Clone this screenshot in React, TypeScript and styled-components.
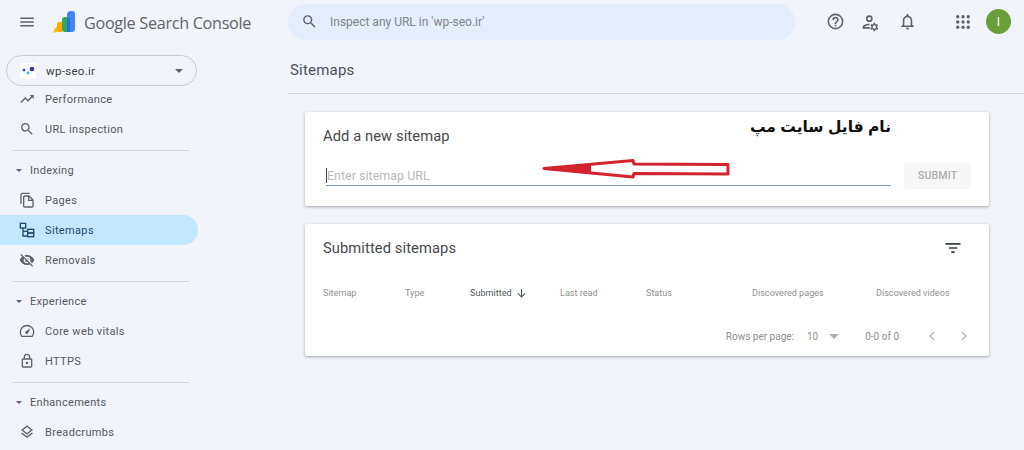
import styled, { createGlobalStyle } from 'styled-components';
import type { ReactNode } from 'react';

const GlobalStyle = createGlobalStyle`
  html, body {
    margin: 0;
    padding: 0;
    background: #f1f4fa;
    font-family: 'Roboto', 'Liberation Sans', sans-serif;
  }
`;

const Page = styled.div`
  width: 1024px;
  height: 450px;
  overflow: hidden;
  background: #f1f4fa;
  display: flex;
  flex-direction: column;
`;

const Header = styled.header`
  height: 43px;
  flex: none;
  display: flex;
  align-items: center;
`;

const Brand = styled.div`
  width: 288px;
  flex: none;
  display: flex;
  align-items: center;
  padding-left: 18px;
  box-sizing: border-box;
`;

const LogoMark = styled.svg`
  margin-left: 16px;
  flex: none;
`;

const BrandName = styled.span`
  font-family: 'Open Sans', 'Liberation Sans', sans-serif;
  font-size: 16.2px;
  color: #5f6368;
  letter-spacing: -0.3px;
  margin-left: 6px;
  padding-top: 2px;
  white-space: nowrap;
`;

const SearchBar = styled.div`
  width: 507px;
  height: 36px;
  flex: none;
  border-radius: 18px;
  background: #e3edfb;
  display: flex;
  align-items: center;
  gap: 12px;
  padding-left: 13px;
  box-sizing: border-box;
  font-size: 12px;
  color: #80868b;
`;

const HeaderActions = styled.div`
  flex: 1;
  display: flex;
  align-items: center;
  padding-left: 31px;
`;

const ActionSlot = styled.div<{ $gap?: number }>`
  width: 18px;
  height: 18px;
  margin-right: ${p => p.$gap ?? 18}px;
  display: flex;
  align-items: center;
  justify-content: center;
`;

const Avatar = styled.div`
  width: 25px;
  height: 25px;
  border-radius: 50%;
  background: #689f38;
  color: #fff;
  font-size: 12px;
  display: flex;
  align-items: center;
  justify-content: center;
`;

const Body = styled.div`
  flex: 1;
  display: flex;
  min-height: 0;
`;

const Sidebar = styled.nav`
  width: 288px;
  flex: none;
  padding-top: 12px;
  box-sizing: border-box;
`;

const PropertyPicker = styled.div`
  width: 191px;
  height: 31px;
  margin: 0 0 -2px 6px;
  border: 1px solid #c9ccd1;
  border-radius: 16px;
  box-sizing: border-box;
  display: flex;
  align-items: center;
  padding: 0 13px;
  font-size: 11.5px;
  color: #3c4043;
  letter-spacing: 0.3px;
`;

const PropertyLogo = styled.div`
  width: 16px;
  height: 16px;
  background: #fff;
  margin-right: 10px;
  display: flex;
  align-items: center;
  justify-content: center;
`;

const PropertyName = styled.span`
  flex: 1;
`;

const NavItem = styled.div<{ $active?: boolean }>`
  width: 198px;
  height: 30px;
  box-sizing: border-box;
  padding-left: 19px;
  display: flex;
  align-items: center;
  gap: 10px;
  font-size: 11px;
  letter-spacing: 0.35px;
  color: ${p => (p.$active ? '#1d4a6b' : '#55595e')};
  background: ${p => (p.$active ? '#c2e7ff' : 'transparent')};
  border-radius: ${p => (p.$active ? '0 15px 15px 0' : '0')};
`;

const NavDivider = styled.div`
  width: 177px;
  height: 1px;
  margin: 6px 0 4px 12px;
  background: #d5d7db;
`;

const SectionTitle = styled.div`
  height: 30px;
  box-sizing: border-box;
  padding-left: 16px;
  display: flex;
  align-items: center;
  gap: 8px;
  font-size: 11px;
  letter-spacing: 0.3px;
  color: #55595e;
`;

const Caret = styled.span<{ $w?: number; $color?: string }>`
  display: block;
  flex: none;
  width: 0;
  height: 0;
  border-left: ${p => p.$w ?? 3}px solid transparent;
  border-right: ${p => p.$w ?? 3}px solid transparent;
  border-top: ${p => p.$w ?? 3}px solid ${p => p.$color ?? '#5f6368'};
`;

const Main = styled.main`
  flex: 1;
  min-width: 0;
`;

const PageTitle = styled.h1`
  margin: 0;
  height: 51px;
  box-sizing: border-box;
  padding: 17px 0 0 2px;
  font-size: 15px;
  line-height: 20px;
  font-weight: 400;
  letter-spacing: 0.2px;
  color: #4d5156;
  border-bottom: 1px solid #d3d5d9;
`;

const Content = styled.div`
  width: 684px;
  margin: 18px 0 0 17px;
  display: flex;
  flex-direction: column;
  gap: 18px;
`;

const Card = styled.section`
  position: relative;
  background: #fff;
  border-radius: 2px;
  box-shadow: 0 1px 3px rgba(60, 64, 67, 0.45);
`;

const AddCard = styled(Card)`
  height: 94px;
  padding: 14px 18px 0;
  box-sizing: border-box;
`;

const CardTitle = styled.h2`
  margin: 0;
  font-size: 14.7px;
  line-height: 20px;
  font-weight: 400;
  letter-spacing: 0.1px;
  color: #45494d;
`;

const InputRow = styled.div`
  display: flex;
  align-items: flex-end;
  margin-top: 16px;
`;

const SitemapInput = styled.div`
  width: 567px;
  height: 21px;
  margin-left: 3px;
  box-sizing: border-box;
  border-bottom: 1.5px solid #7e9dc2;
  display: flex;
  align-items: center;
  font-size: 12.5px;
  color: #b9b9b9;
`;

const Cursor = styled.span`
  width: 1px;
  height: 15px;
  background: #444;
`;

const SubmitButton = styled.div`
  width: 67px;
  height: 27px;
  margin: 0 0 -3px 13px;
  border-radius: 2px;
  background: #f7f7f7;
  color: #adadad;
  font-size: 10.5px;
  font-weight: 500;
  letter-spacing: 0.2px;
  display: flex;
  align-items: center;
  justify-content: center;
`;

const ArrowOverlay = styled.svg`
  position: absolute;
  left: 236px;
  top: 44px;
`;

const PersianNote = styled.div`
  position: absolute;
  left: 444px;
  top: 3px;
  width: 142px;
  text-align: right;
  direction: rtl;
  font-family: 'DejaVu Sans', 'Noto Sans', sans-serif;
  font-weight: 700;
  font-size: 15.5px;
  word-spacing: -1px;
  line-height: 24px;
  color: #111;
  white-space: nowrap;
`;

const SubmittedCard = styled(Card)`
  height: 132px;
  padding: 14px 18px 0;
  box-sizing: border-box;
`;

const CardHead = styled.div`
  display: flex;
  align-items: center;
  justify-content: space-between;
  padding-right: 8px;
`;

const ColumnRow = styled.div`
  display: flex;
  align-items: center;
  height: 16px;
  margin-top: 27px;
  font-size: 9.1px;
  color: #8f8f8f;
`;

const Column = styled.div<{ $w: number; $active?: boolean }>`
  width: ${p => p.$w}px;
  flex: none;
  display: flex;
  align-items: center;
  gap: 3px;
  white-space: nowrap;
  color: ${p => (p.$active ? '#54585c' : '#8f8f8f')};
`;

const Pager = styled.div`
  display: flex;
  align-items: center;
  justify-content: flex-end;
  height: 16px;
  margin: 27px -2px 0 0;
  font-size: 10px;
  color: #8f8f8f;
`;

const PagerText = styled.span<{ $ml?: number }>`
  margin-left: ${p => p.$ml ?? 0}px;
  white-space: nowrap;
`;

const PagerCaret = styled.span`
  margin-left: 11px;
`;

const PagerNav = styled.div<{ $ml: number }>`
  margin-left: ${p => p.$ml}px;
  display: flex;
  gap: 14px;
`;

const IconSvg = styled.svg`
  flex: none;
`;

const Icon = ({ children, size = 16, color = '#5f6368' }: { children: ReactNode; size?: number; color?: string }) => (
  <IconSvg width={size} height={size} viewBox="0 0 24 24" fill={color}>
    {children}
  </IconSvg>
);

const Outline = ({ color = '#5f6368', children }: { color?: string; children: ReactNode }) => (
  <g fill="none" stroke={color} strokeWidth="2">
    {children}
  </g>
);

const SEARCH_PATH =
  'M15.5 14h-.79l-.28-.27A6.47 6.47 0 0 0 16 9.5 6.5 6.5 0 1 0 9.5 16c1.61 0 3.09-.59 4.23-1.57l.27.28v.79l5 4.99L20.49 19l-4.99-5zm-6 0C7.01 14 5 11.99 5 9.5S7.01 5 9.5 5 14 7.01 14 9.5 11.99 14 9.5 14z';

const PerformanceIcon = () => (
  <Icon>
    <path d="M16 6l2.29 2.29-4.88 4.88-4-4L2 16.59 3.41 18l6-6 4 4 6.3-6.29L22 12V6z" />
  </Icon>
);

const SearchIcon = () => (
  <Icon>
    <path d={SEARCH_PATH} />
  </Icon>
);

const PagesIcon = () => (
  <Icon>
    <Outline>
      <path d="M16 2H5a2 2 0 0 0-2 2v14" />
      <path d="M8.5 6H15l6 6v9a1.5 1.5 0 0 1-1.5 1.5h-11A1.5 1.5 0 0 1 7 21V7.5A1.5 1.5 0 0 1 8.5 6z" />
      <path d="M14.5 6v6.5H21" />
    </Outline>
  </Icon>
);

const SitemapsIcon = () => (
  <Icon color="#1d4a6b">
    <Outline color="#1d4a6b">
      <rect x="2" y="2" width="8" height="7" />
      <path d="M6 9v12h7M6 14h7" />
      <rect x="13" y="11" width="9" height="5.5" />
      <rect x="13" y="16.5" width="9" height="5.5" />
    </Outline>
  </Icon>
);

const RemovalsIcon = () => (
  <Icon>
    <path d="M12 7a5 5 0 0 1 5 5c0 .65-.13 1.26-.36 1.83l2.92 2.92A11.8 11.8 0 0 0 23 12c-1.73-4.39-6-7.5-11-7.5-1.4 0-2.74.25-3.98.7l2.16 2.16C10.74 7.13 11.35 7 12 7zM2 4.27l2.28 2.28.46.46A11.8 11.8 0 0 0 1 12c1.73 4.39 6 7.5 11 7.5 1.55 0 3.03-.3 4.38-.84l.42.42L19.73 22 21 20.73 3.27 3 2 4.27zM7.53 9.8l1.55 1.55A2.8 2.8 0 0 0 9 12a3 3 0 0 0 3 3c.22 0 .44-.03.65-.08l1.55 1.55A5 5 0 0 1 7.53 9.8zm4.31-.78l3.15 3.15.02-.16a3 3 0 0 0-3-3l-.17.01z" />
  </Icon>
);

const VitalsIcon = () => (
  <Icon>
    <Outline>
      <path d="M4.2 20A10 10 0 1 1 19.8 20z" strokeLinejoin="round" />
    </Outline>
    <path d="M17 8l-6.5 4.2a2.2 2.2 0 1 0 3 3z" />
  </Icon>
);

const LockIcon = () => (
  <Icon>
    <path d="M18 8h-1V6A5 5 0 0 0 7 6v2H6c-1.1 0-2 .9-2 2v10c0 1.1.9 2 2 2h12c1.1 0 2-.9 2-2V10c0-1.1-.9-2-2-2zM9 6a3 3 0 0 1 6 0v2H9V6zm9 14H6V10h12v10zm-6-3a2 2 0 1 0 0-4 2 2 0 0 0 0 4z" />
  </Icon>
);

const LayersIcon = () => (
  <Icon>
    <path d="M11.99 18.54l-7.37-5.73L3 14.07l9 7 9-7-1.63-1.27-7.38 5.74zM12 16l7.36-5.73L21 9l-9-7-9 7 1.63 1.27L12 16zm0-11.47L17.74 9 12 13.47 6.26 9 12 4.53z" />
  </Icon>
);

const App = () => {
  return (
    <Page>
      <GlobalStyle />
      <Header>
        <Brand>
          <Icon size={18}>
            <path d="M3 6h18v2H3zM3 11h18v2H3zM3 16h18v2H3z" />
          </Icon>
          <LogoMark width="26" height="26" viewBox="0 0 26 26">
            <path d="M1 24c1-4 3-6 6-8l1 6z" fill="#fbbc04" />
            <rect x="5" y="13" width="6" height="10" rx="2" fill="#f9ab00" />
            <rect x="10" y="8" width="7" height="15" rx="3" fill="#34a853" />
            <path d="M15 6a4 4 0 0 1 4-4h1a3 3 0 0 1 3 3v15a3 3 0 0 1-3 3h-5z" fill="#4285f4" />
            <rect x="15" y="9" width="3" height="14" fill="#1a73e8" />
          </LogoMark>
          <BrandName>Google Search Console</BrandName>
        </Brand>
        <SearchBar>
          <Icon size={17}>
            <path d={SEARCH_PATH} />
          </Icon>
          Inspect any URL in 'wp-seo.ir'
        </SearchBar>
        <HeaderActions>
          <ActionSlot>
            <Icon size={19}>
              <path d="M11 18h2v-2h-2v2zm1-16a10 10 0 1 0 0 20 10 10 0 0 0 0-20zm0 18a8 8 0 1 1 0-16 8 8 0 0 1 0 16zm0-14a4 4 0 0 0-4 4h2a2 2 0 1 1 4 0c0 2-3 1.75-3 5h2c0-2.25 3-2.5 3-5a4 4 0 0 0-4-4z" />
            </Icon>
          </ActionSlot>
          <ActionSlot>
            <Icon size={20}>
              <path d="M10 12a4 4 0 1 0 0-8 4 4 0 0 0 0 8zm0-6a2 2 0 1 1 0 4 2 2 0 0 1 0-4zM4 18c.2-.7 3.3-2 6-2 .1-.7.3-1.4.6-2H10c-3 0-8 1.2-8 4v2h9.5a6 6 0 0 1-1.2-2H4zm15.4-.9l1.1-.9-1-1.7-1.3.5a3.2 3.2 0 0 0-1.2-.7L17 13h-2l-.2 1.3c-.5.2-.9.4-1.2.7l-1.3-.5-1 1.7 1.1.9v1.6l-1.1.9 1 1.7 1.3-.5c.3.3.7.5 1.2.7L15 23h2l.2-1.4c.5-.2.9-.4 1.2-.7l1.3.5 1-1.7-1.1-.9c.1-.6.1-1.1 0-1.7zM16 20a2 2 0 1 1 0-4 2 2 0 0 1 0 4z" />
            </Icon>
          </ActionSlot>
          <ActionSlot $gap={38}>
            <Icon size={19}>
              <path d="M12 22a2 2 0 0 0 2-2h-4a2 2 0 0 0 2 2zm6-6v-5c0-3.07-1.63-5.64-4.5-6.32V4a1.5 1.5 0 0 0-3 0v.68C7.64 5.36 6 7.92 6 11v5l-2 2v1h16v-1l-2-2zm-2 1H8v-6c0-2.48 1.51-4.5 4-4.5s4 2.02 4 4.5v6z" />
            </Icon>
          </ActionSlot>
          <ActionSlot $gap={14}>
            <Icon size={18}>
              {[5, 12, 19].flatMap(y =>
                [5, 12, 19].map(x => <circle key={`${x}-${y}`} cx={x} cy={y} r="2.2" />)
              )}
            </Icon>
          </ActionSlot>
          <Avatar>I</Avatar>
        </HeaderActions>
      </Header>
      <Body>
        <Sidebar>
          <PropertyPicker>
            <PropertyLogo>
              <svg width="13" height="9" viewBox="0 0 13 9">
                <circle cx="2" cy="4" r="1.5" fill="#3f51b5" />
                <circle cx="6" cy="7" r="1.4" fill="#29b6f6" />
                <circle cx="10" cy="3" r="2.3" fill="#4527a0" />
              </svg>
            </PropertyLogo>
            <PropertyName>wp-seo.ir</PropertyName>
            <Caret $w={4} />
          </PropertyPicker>
          <NavItem>
            <PerformanceIcon />
            Performance
          </NavItem>
          <NavItem>
            <SearchIcon />
            URL inspection
          </NavItem>
          <NavDivider />
          <SectionTitle>
            <Caret />
            Indexing
          </SectionTitle>
          <NavItem>
            <PagesIcon />
            Pages
          </NavItem>
          <NavItem $active>
            <SitemapsIcon />
            Sitemaps
          </NavItem>
          <NavItem>
            <RemovalsIcon />
            Removals
          </NavItem>
          <NavDivider />
          <SectionTitle>
            <Caret />
            Experience
          </SectionTitle>
          <NavItem>
            <VitalsIcon />
            Core web vitals
          </NavItem>
          <NavItem>
            <LockIcon />
            HTTPS
          </NavItem>
          <NavDivider />
          <SectionTitle>
            <Caret />
            Enhancements
          </SectionTitle>
          <NavItem>
            <LayersIcon />
            Breadcrumbs
          </NavItem>
        </Sidebar>
        <Main>
          <PageTitle>Sitemaps</PageTitle>
          <Content>
            <AddCard>
              <CardTitle>Add a new sitemap</CardTitle>
              <InputRow>
                <SitemapInput>
                  <Cursor />
                  Enter sitemap URL
                </SitemapInput>
                <SubmitButton>SUBMIT</SubmitButton>
              </InputRow>
              <ArrowOverlay width="190" height="24" viewBox="0 0 190 24">
                <path
                  d="M3 12.5 L92 4.5 L93 8 L187 8.5 L187 18 L93 17.5 L92 21 Z"
                  fill="#fff"
                  stroke="#d2232f"
                  strokeWidth="3"
                  strokeLinejoin="round"
                />
                <path d="M2 12.5 L50 9 L50 16 Z" fill="#d2232f" />
              </ArrowOverlay>
              <PersianNote>نام فایل سایت مپ</PersianNote>
            </AddCard>
            <SubmittedCard>
              <CardHead>
                <CardTitle>Submitted sitemaps</CardTitle>
                <Icon size={20} color="#3c4043">
                  <path d="M3 6h18v2H3zM7 11h10v2H7zM10 16h4v2h-4z" />
                </Icon>
              </CardHead>
              <ColumnRow>
                <Column $w={82}>Sitemap</Column>
                <Column $w={65}>Type</Column>
                <Column $w={90} $active>
                  Submitted
                  <Icon size={13} color="#54585c">
                    <path d="M11 4h2v12l5-5 1.4 1.4L12 20l-7.4-7.6L6 11l5 5z" />
                  </Icon>
                </Column>
                <Column $w={86}>Last read</Column>
                <Column $w={106}>Status</Column>
                <Column $w={124}>Discovered pages</Column>
                <Column $w={80}>Discovered videos</Column>
              </ColumnRow>
              <Pager>
                <PagerText>Rows per page:</PagerText>
                <PagerText $ml={13}>10</PagerText>
                <PagerCaret>
                  <Caret $w={5} $color="#b0b0b0" />
                </PagerCaret>
                <PagerText $ml={26}>0-0 of 0</PagerText>
                <PagerNav $ml={24}>
                  <Icon size={18} color="#b5b5b5">
                    <path d="M15.4 7.4L14 6l-6 6 6 6 1.4-1.4L10.8 12z" />
                  </Icon>
                  <Icon size={18} color="#b5b5b5">
                    <path d="M8.6 7.4L10 6l6 6-6 6-1.4-1.4 4.6-4.6z" />
                  </Icon>
                </PagerNav>
              </Pager>
            </SubmittedCard>
          </Content>
        </Main>
      </Body>
    </Page>
  );
};

export default App;
